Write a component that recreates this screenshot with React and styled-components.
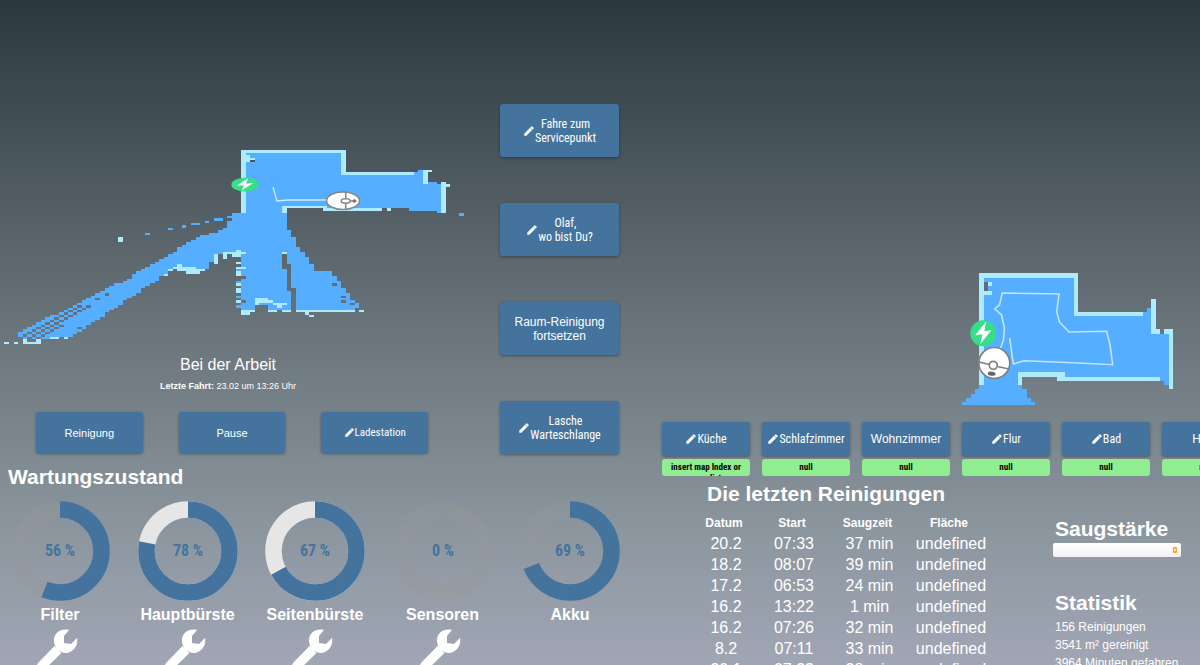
import React from 'react';
import styled, { createGlobalStyle } from 'styled-components';
import { MdEdit } from 'react-icons/md';

const FLOOR = '#55aeff';
const WALL = '#aeebff';

const GlobalStyle = createGlobalStyle`
  * {
    box-sizing: border-box;
  }

  html, body {
    margin: 0;
    height: 100%;
    overflow: hidden;
  }

  body {
    font-family: 'Liberation Sans', Arial, sans-serif;
    color: #fff;
    background: linear-gradient(180deg, #2b393f 0%, #4f5a61 28%, #6e7980 54%, #8e98a1 82%, #a1a6b5 100%);
  }
`;

const Dashboard = styled.main`
  display: grid;
  grid-template-columns: 8fr 7fr;
  height: 100vh;
  overflow: hidden;
`;

const Pane = styled.section`
  min-width: 0;
  overflow: hidden;
`;

const LiveArea = styled.div`
  display: grid;
  grid-template-columns: 3fr 1fr;
`;

const LiveView = styled.div`
  padding-top: 140px;
`;

const MapSvg = styled.svg`
  display: block;
  width: 100%;
`;

const Status = styled.div`
  padding-right: 24px;
  text-align: center;

  h1 {
    margin: 0;
    font-size: 16px;
    font-weight: 400;
    line-height: 20px;
  }

  p {
    margin: 6px 0 0;
    font-size: 9px;
    line-height: 10px;
  }
`;

const Button = styled.button`
  display: flex;
  align-items: center;
  justify-content: center;
  height: ${({ $height }) => $height}px;
  padding: 0;
  border: 0;
  border-radius: 3px;
  background: #44739e;
  box-shadow: 0 1px 3px rgba(0, 0, 0, 0.35);
  color: #fff;
  font-family: ${({ $narrow }) => ($narrow ? "'Roboto Condensed', 'Liberation Sans Narrow', Roboto, sans-serif" : "'Liberation Sans', Arial, sans-serif")};
  font-size: ${({ $size }) => $size}px;
  line-height: 14px;
  white-space: pre-line;
  cursor: pointer;

  svg {
    flex: none;
  }

  svg path:last-child {
    stroke-width: 1px;
  }
`;

const SideButtons = styled.div`
  display: grid;
  align-content: start;
  gap: 46px;
  padding: 104px 21px 0 20px;
`;

const ActionRow = styled.div`
  display: grid;
  grid-template-columns: repeat(3, 1fr);
  gap: 36px;
  padding: 21px 52px 0 36px;
`;

const Heading = styled.h2`
  margin: 0;
  font-size: 21px;
  font-weight: 700;
  line-height: 26px;
`;

const Maintenance = styled.div`
  padding: 10px 20px 0 8px;
`;

const Gauges = styled.div`
  display: flex;
  justify-content: space-between;
  padding: 11px 0 0 2px;
`;

const GaugeItem = styled.div`
  display: flex;
  flex-direction: column;
  align-items: center;
  width: 100px;

  strong {
    margin: 4px 0;
    font-size: 16px;
    line-height: 20px;
  }
`;

const GaugeText = styled.text`
  fill: #44739e;
  font: 700 16px 'Roboto Condensed', 'Liberation Sans Narrow', Roboto, sans-serif;
  text-anchor: middle;
`;

const WrenchIcon = styled.svg`
  margin-right: 4px;
`;

const RoomView = styled.div`
  padding-top: 260px;
`;

const Rooms = styled.div`
  display: grid;
  grid-auto-flow: column;
  grid-auto-columns: 88px;
  gap: 12px;
  padding: 17px 0 0 22px;
`;

const Room = styled.div`
  display: grid;
  gap: 3px;
`;

const RoomTag = styled.div`
  height: 17px;
  overflow: hidden;
  padding: 0 8px;
  border-radius: 3px;
  background: #90ee90;
  color: #000;
  font: 700 9px/17px 'Roboto Condensed', 'Liberation Sans Narrow', Roboto, sans-serif;
  line-height: ${({ $long }) => ($long ? 11 : 17)}px;
  padding-top: ${({ $long }) => ($long ? 3 : 0)}px;
  text-align: center;
`;

const Lower = styled.div`
  display: flex;
  justify-content: space-between;
  padding: 5px 19px 0 53px;
`;

const History = styled.div`
  h2 {
    padding-left: 14px;
  }
`;

const Table = styled.table`
  width: 299px;
  margin-top: 6px;
  table-layout: fixed;
  border-collapse: collapse;
  text-align: center;

  th, td {
    padding: 0;
  }

  th {
    padding-right: 2px;
    font-size: 12px;
    line-height: 20px;
  }

  td {
    padding-left: 2px;
    font-size: 16px;
    line-height: 21px;
  }
`;

const Col = styled.col`
  width: ${({ $w }) => $w}px;
`;

const Info = styled.aside`
  width: 128px;
  padding-top: 35px;
  white-space: nowrap;

  h2, p {
    padding-left: 2px;
  }

  p {
    margin: 0;
    font-size: 12px;
    line-height: 18px;
  }

  h2 + p {
    margin-top: 2px;
  }
`;

const SelectBox = styled.label`
  display: flex;
  align-items: center;
  height: 14px;
  margin: 1px 0 33px;
  padding-right: 4px;
  border-radius: 2px;
  background: linear-gradient(#fff, #f1f1f1);

  select {
    flex: 1;
    height: 14px;
    border: 0;
    background: transparent;
    appearance: none;
  }
`;

// Each map is a coarse pixel grid: areas are painted or cleared, one cell at a time
function paint({ ox, oy, cw, ch, ops }) {
  const cells = {};
  const set = (c, r, color) => {
    cells[r] = cells[r] || {};
    cells[r][c] = color;
  };
  ops.forEach(([color, ...data]) => {
    if (Array.isArray(data[0])) {
      const pts = data.map(([x, y]) => [(x - ox) / cw, (y - oy) / ch]);
      const ys = pts.map((p) => p[1]);
      for (let r = Math.floor(Math.min(...ys)); r <= Math.max(...ys); r += 1) {
        const hits = [];
        pts.forEach(([x1, y1], i) => {
          const [x2, y2] = pts[(i + 1) % pts.length];
          const y = r + 0.5;
          if (y1 <= y !== y2 <= y) hits.push(x1 + ((y - y1) / (y2 - y1)) * (x2 - x1));
        });
        hits.sort((a, b) => a - b);
        for (let i = 0; i + 1 < hits.length; i += 2) {
          for (let c = Math.round(hits[i]); c < Math.round(hits[i + 1]); c += 1) set(c, r, color);
        }
      }
    } else {
      const [x1, y1, x2, y2] = data;
      for (let r = Math.round((y1 - oy) / ch); r < Math.round((y2 - oy) / ch); r += 1) {
        for (let c = Math.round((x1 - ox) / cw); c < Math.round((x2 - ox) / cw); c += 1) set(c, r, color);
      }
    }
  });
  const spans = [];
  Object.keys(cells).forEach((r) => {
    const cols = Object.keys(cells[r]).map(Number).sort((a, b) => a - b);
    let last = null;
    cols.forEach((c) => {
      const color = cells[r][c];
      if (!color) return;
      if (last && last.color === color && last.end === c) last.end += 1;
      else {
        last = { r: Number(r), start: c, end: c + 1, color };
        spans.push(last);
      }
    });
  });
  return spans;
}

function PixelMap({ map }) {
  const { ox, oy, cw, ch } = map;
  return (
    <g shapeRendering="crispEdges">
      {paint(map).map((s) => (
        <rect key={`${s.r}-${s.start}`} x={ox + s.start * cw} y={oy + s.r * ch} width={(s.end - s.start) * cw} height={ch} fill={s.color} />
      ))}
    </g>
  );
}

const stairs = (x, y, n) => Array.from({ length: n }, (_, i) => [null, x + i * 4.55, y - i * 2.42, x + (i + 1) * 4.55, y + 2.42 - i * 2.42]);

const liveMap = {
  ox: 241,
  oy: 150.34,
  cw: 4.55,
  ch: 2.42,
  ops: [
    // beam to the lower left
    [FLOOR, [241, 213], [228, 217], [228, 225], [223, 230], [215, 233], [196, 237], [182, 247], [155, 262], [141, 270], [132, 276], [119, 284], [109, 286], [90, 297], [60, 312], [16, 335], [24, 339], [70, 337], [80, 331], [95, 321], [118, 306], [132, 296], [150, 285], [163, 276], [178, 267], [195, 270], [209, 269], [209, 261], [218, 259], [222, 253], [241, 253]],
    ...stairs(22.6, 334.3, 13),
    ...stairs(27.1, 336.7, 14),
    ...stairs(31.7, 339.1, 7),
    [null, 77, 327, 82, 330],
    [null, 95, 298, 100, 300],
    [null, 105, 293, 109, 296],
    // rooms
    [FLOOR, 241, 150, 346, 213],
    [FLOOR, 341, 174, 419, 208],
    [FLOOR, 414, 172, 428, 208],
    [FLOOR, 419, 170, 428, 208],
    [FLOOR, 428, 182, 437, 211],
    [FLOOR, 437, 184, 441, 213],
    [FLOOR, 409, 206, 437, 211],
    [null, 286, 208, 346, 213],
    [FLOOR, [227, 216], [241, 213], [284, 213], [287, 227], [291, 232], [294, 240], [298, 247], [303, 252], [307, 258], [312, 265], [314, 271], [328, 270], [334, 275], [345, 290], [350, 297], [355, 303], [355, 311], [241, 311], [241, 253], [227, 253]],
    [FLOOR, 355, 303, 359, 308],
    [null, 341, 300, 346, 302],
    [null, 332, 284, 337, 286],
    [null, 341, 295, 346, 298],
    [null, 350, 303, 355, 306],
    [null, 282, 254, 287, 269],
    [null, 287, 264, 291, 291],
    [null, 291, 289, 296, 313],
    [WALL, 282, 252, 287, 254],
    // walls
    [WALL, 241, 150, 346, 153],
    [WALL, 241, 150, 246, 213],
    [WALL, 341, 150, 346, 175],
    [WALL, 341, 173, 414, 175],
    [WALL, 423, 170, 428, 185],
    [WALL, 423, 170, 432, 173],
    [WALL, 441, 182, 446, 213],
    [WALL, 446, 185, 450, 187],
    [WALL, 282, 206, 328, 208],
    [WALL, 282, 206, 287, 213],
    [WALL, 323, 209, 382, 211],
    [WALL, 387, 209, 391, 211],
    [WALL, 246, 155, 250, 163],
    [WALL, 250, 158, 255, 160],
    [null, 250, 160, 255, 163],
    [FLOOR, 460, 213, 464, 216],
    [null, 228, 218, 232, 220],
    [null, 223, 225, 227, 228],
    [WALL, 223, 252, 246, 254],
    [WALL, 223, 252, 227, 259],
    [WALL, 232, 254, 241, 257],
    [WALL, 237, 250, 241, 252],
    // frayed edge left of the hallway
    [WALL, 237, 262, 241, 265],
    [WALL, 237, 267, 246, 269],
    [FLOOR, 237, 269, 241, 272],
    [WALL, 237, 272, 241, 277],
    [null, 241, 277, 246, 279],
    [FLOOR, 237, 281, 241, 284],
    [WALL, 237, 284, 241, 286],
    [WALL, 237, 289, 241, 294],
    [FLOOR, 237, 296, 241, 299],
    [WALL, 237, 301, 241, 304],
    [FLOOR, 237, 306, 241, 308],
    [null, 241, 301, 246, 304],
    [WALL, 241, 310, 255, 313],
    [WALL, 241, 313, 250, 315],
    [null, 255, 305, 268, 313],
    [WALL, 255, 298, 268, 303],
    [WALL, 255, 298, 259, 306],
    [WALL, 268, 301, 273, 304],
    [WALL, 273, 303, 286, 306],
    [WALL, 278, 306, 282, 308],
    [WALL, 268, 310, 277, 313],
    [null, 277, 310, 282, 313],
    [WALL, 282, 310, 291, 313],
    [WALL, 296, 310, 355, 313],
    [WALL, 359, 310, 364, 313],
    [WALL, 305, 313, 309, 315],
    [WALL, 309, 315, 314, 318],
    // obstacles along the beam
    [WALL, 177, 264, 182, 267],
    [WALL, 173, 267, 196, 269],
    [WALL, 168, 269, 173, 272],
    [WALL, 177, 269, 205, 272],
    [WALL, 187, 271, 200, 274],
    [WALL, 163, 274, 168, 276],
    [WALL, 214, 254, 218, 264],
    [WALL, 4, 341, 9, 344],
    [WALL, 13, 341, 18, 344],
    [WALL, 22, 341, 41, 344],
    [WALL, 22, 339, 27, 341],
    [WALL, 36, 339, 41, 341],
    [WALL, 50, 336, 59, 339],
    [WALL, 63, 336, 68, 339],
    [WALL, 118, 237, 123, 242],
    [FLOOR, 145, 233, 150, 235],
    [FLOOR, 168, 228, 173, 230],
    [FLOOR, 182, 226, 186, 228],
    [FLOOR, 191, 223, 200, 226],
    [FLOOR, 205, 221, 209, 223],
    [FLOOR, 214, 218, 223, 221],
  ],
};

const roomMap = {
  ox: 979.3,
  oy: 273.3,
  cw: 4.3,
  ch: 4.3,
  ops: [
    [FLOOR, 979, 273, 1078, 377],
    [FLOOR, 1074, 312, 1151, 377],
    [FLOOR, 1147, 307, 1151, 377],
    [FLOOR, 1151, 333, 1168, 381],
    [FLOOR, 1164, 377, 1168, 385],
    [null, 1151, 381, 1164, 386],
    [null, 1022, 377, 1057, 390],
    [FLOOR, 979, 376, 1022, 390],
    [FLOOR, 975, 389, 1026, 394],
    [FLOOR, 971, 394, 1026, 398],
    [FLOOR, 967, 398, 1031, 402],
    [FLOOR, 962, 402, 1035, 406],
    [WALL, 979, 273, 1078, 277],
    [WALL, 979, 273, 984, 385],
    [WALL, 1074, 273, 1078, 316],
    [WALL, 1074, 312, 1143, 316],
    [WALL, 988, 282, 993, 286],
    [WALL, 984, 290, 993, 295],
    [null, 984, 282, 988, 290],
    [WALL, 1151, 299, 1156, 333],
    [WALL, 1151, 329, 1160, 333],
    [WALL, 1164, 329, 1173, 333],
    [WALL, 1168, 329, 1173, 389],
    [WALL, 1018, 372, 1065, 376],
    [WALL, 1018, 372, 1022, 385],
    [WALL, 1057, 376, 1160, 381],
  ],
};

function Charger() {
  return (
    <>
      <circle r="13" fill="#36de87" />
      <path d="M3 -12 L-8 2 L-1 1 L-3 11 L8 -3 L1 -2 Z" fill="#fff" />
    </>
  );
}

function LiveMap() {
  return (
    <MapSvg viewBox="0 140 480 215" role="img" aria-label="Karte">
      <PixelMap map={liveMap} />
      <path d="M273 187 L277 201 L288 200 L328 200" fill="none" stroke="#d3e9ff" strokeWidth="1.3" />
      <g transform="translate(245 184.7) scale(1.05 .53)">
        <Charger />
      </g>
      <ellipse cx="343" cy="200.7" rx="16.5" ry="8.8" fill="#fff" stroke="#888" strokeWidth="1.6" />
      <path d="M345.7 192.5 V198 M345.7 203 V209 M350 201 H353" stroke="#888" strokeWidth="1.6" />
      <ellipse cx="345.7" cy="201" rx="4.5" ry="2.2" fill="#fff" stroke="#888" strokeWidth="1.6" />
      <ellipse cx="354.5" cy="201" rx="2" ry="1.8" fill="#777" />
    </MapSvg>
  );
}

function RoomMap() {
  return (
    <MapSvg viewBox="640 260 560 145" role="img" aria-label="Raumkarte">
      <PixelMap map={roomMap} />
      <path
        d="M1000.5 348 L1003.5 340 L1004.5 328 L1001.5 315 L994.7 308.7 L999.5 305 L1002.3 293 L1059 294 L1056.7 312 L1059.5 322 L1069 332 L1106.7 331.3 L1110 345 L1112.7 364.7 L1073 362.7 L1024 360.7 L1013.3 364 L1009.7 338"
        fill="none"
        stroke="#c3e2ff"
        strokeWidth="1.6"
      />
      <g transform="translate(983.3 333.3)">
        <Charger />
      </g>
      <circle cx="994.3" cy="363" r="15.5" fill="#fff" stroke="#808080" strokeWidth="1.7" />
      <path d="M979 362 L989.5 364.5 M997.5 366.5 L1009 369" stroke="#808080" strokeWidth="1.7" />
      <circle cx="993.3" cy="365.3" r="4" fill="#fff" stroke="#808080" strokeWidth="1.7" />
      <ellipse cx="991.7" cy="373.7" rx="4" ry="2" transform="rotate(8 991.7 373.7)" fill="#666" />
    </MapSvg>
  );
}

function Wrench() {
  return (
    <WrenchIcon width="44" height="44" viewBox="0 0 44 44" aria-hidden="true">
      <path d="M33 1 C24 -1 17 5 18 13 C19 21 27 26 34 23 C40 20 42 14 41 9 L35 15 L28 14 L28 7 Z" fill="#fff" />
      <path d="M18.5 17 L25.5 24 L8 41 Q4 44 2 40 Q0 37 2 34 Z" fill="#fff" />
    </WrenchIcon>
  );
}

function Gauge({ value, label, track = 'rgba(153, 153, 153, 0.3)', service }) {
  const circumference = 2 * Math.PI * 41.5;
  return (
    <GaugeItem>
      <svg width="100" height="100" viewBox="0 0 100 100" role="img" aria-label={`${label} ${value} %`}>
        <circle cx="50" cy="50" r="41.5" fill="none" stroke={track} strokeWidth="16.5" />
        <circle
          cx="50"
          cy="50"
          r="41.5"
          fill="none"
          stroke="#44739e"
          strokeWidth="16.5"
          strokeDasharray={`${(value / 100) * circumference} ${circumference}`}
          transform="rotate(-90 50 50)"
        />
        <GaugeText x="50" y="55">{`${value} %`}</GaugeText>
      </svg>
      <strong>{label}</strong>
      {service && <Wrench />}
    </GaugeItem>
  );
}

const sideButtons = [
  { text: 'Fahre zum\nServicepunkt', edit: true },
  { text: 'Olaf,\nwo bist Du?', edit: true },
  { text: 'Raum-Reinigung\nfortsetzen' },
  { text: 'Lasche\nWarteschlange', edit: true },
];

const rooms = [
  { name: 'Küche', edit: true, tag: 'insert map Index or zone list' },
  { name: 'Schlafzimmer', edit: true },
  { name: 'Wohnzimmer' },
  { name: 'Flur', edit: true },
  { name: 'Bad', edit: true },
  { name: 'Halle' },
];

const runs = [
  ['20.2', '07:33', '37 min'],
  ['18.2', '08:07', '39 min'],
  ['17.2', '06:53', '24 min'],
  ['16.2', '13:22', '1 min'],
  ['16.2', '07:26', '32 min'],
  ['8.2', '07:11', '33 min'],
  ['30.1', '07:33', '38 min'],
];

function App() {
  return (
    <>
      <GlobalStyle />
      <Dashboard>
        <Pane>
          <LiveArea>
            <LiveView>
              <LiveMap />
              <Status>
                <h1>Bei der Arbeit</h1>
                <p>
                  <b>Letzte Fahrt:</b> 23.02 um 13:26 Uhr
                </p>
              </Status>
              <ActionRow>
                <Button $height={41} $size={11}>Reinigung</Button>
                <Button $height={41} $size={11}>Pause</Button>
                <Button $height={41} $size={11} $narrow>
                  <MdEdit size={11} />
                  Ladestation
                </Button>
              </ActionRow>
            </LiveView>
            <SideButtons>
              {sideButtons.map(({ text, edit }) => (
                <Button key={text} $height={53} $size={12} $narrow={edit}>
                  {edit && <MdEdit size={12} />}
                  <span>{text}</span>
                </Button>
              ))}
            </SideButtons>
          </LiveArea>
          <Maintenance>
            <Heading>Wartungszustand</Heading>
            <Gauges>
              <Gauge value={56} label="Filter" service />
              <Gauge value={78} label="Hauptbürste" track="#e6e6e6" service />
              <Gauge value={67} label="Seitenbürste" track="#e6e6e6" service />
              <Gauge value={0} label="Sensoren" service />
              <Gauge value={69} label="Akku" />
            </Gauges>
          </Maintenance>
        </Pane>

        <Pane>
          <RoomView>
            <RoomMap />
          </RoomView>
          <Rooms>
            {rooms.map(({ name, edit, tag }) => (
              <Room key={name}>
                <Button $height={34} $size={12} $narrow={edit}>
                  {edit && <MdEdit size={12} />}
                  {name}
                </Button>
                <RoomTag $long={Boolean(tag)}>{tag || 'null'}</RoomTag>
              </Room>
            ))}
          </Rooms>
          <Lower>
            <History>
              <Heading>Die letzten Reinigungen</Heading>
              <Table>
                <colgroup>
                  <Col $w={64} />
                  <Col $w={72} />
                  <Col $w={79} />
                  <Col $w={84} />
                </colgroup>
                <thead>
                  <tr>
                    <th>Datum</th>
                    <th>Start</th>
                    <th>Saugzeit</th>
                    <th>Fläche</th>
                  </tr>
                </thead>
                <tbody>
                  {runs.map(([date, start, time]) => (
                    <tr key={date + start}>
                      <td>{date}</td>
                      <td>{start}</td>
                      <td>{time}</td>
                      <td>undefined</td>
                    </tr>
                  ))}
                </tbody>
              </Table>
            </History>
            <Info>
              <Heading>Saugstärke</Heading>
              <SelectBox>
                <select aria-label="Saugstärke">
                  <option value="" />
                </select>
                <svg width="4" height="6" viewBox="0 0 4 6" aria-hidden="true">
                  <rect width="4" height="6" rx="1" fill="#f5a32d" />
                  <path d="M1 3 L2 1.5 L3 3 L2 4.5 Z" fill="#fff" />
                </svg>
              </SelectBox>
              <Heading>Statistik</Heading>
              <p>156 Reinigungen</p>
              <p>3541 m² gereinigt</p>
              <p>3964 Minuten gefahren</p>
            </Info>
          </Lower>
        </Pane>
      </Dashboard>
    </>
  );
}

export default App;
